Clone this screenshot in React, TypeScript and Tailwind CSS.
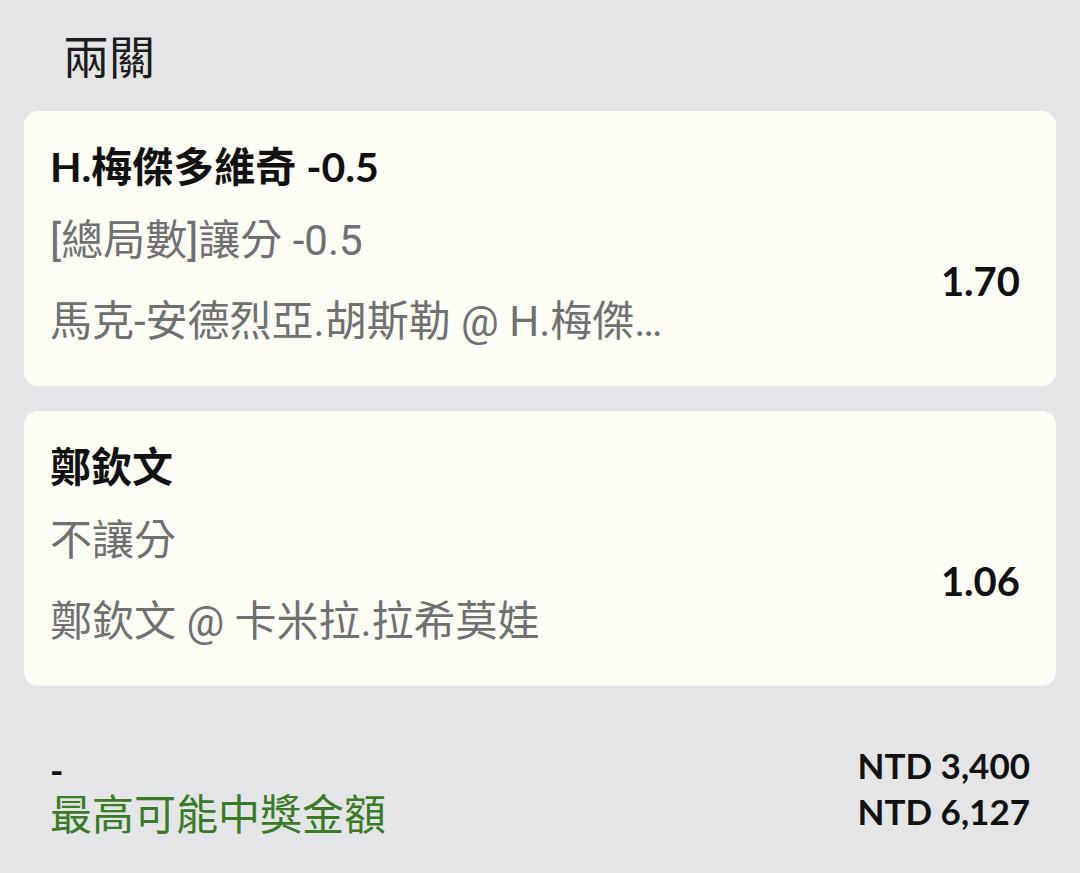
const latin = "font-['Lato','Noto_Sans_CJK_TC',sans-serif]";
const cjk = "font-['Noto_Sans_CJK_TC','Noto_Sans',sans-serif]";
const sub = "font-['Roboto','Noto_Sans_CJK_TC',sans-serif]";

interface Leg {
  pick: string;
  market: string;
  match: string;
  odds: string;
}

const legs: Leg[] = [
  {
    pick: "H.梅傑多維奇 -0.5",
    market: "[總局數]讓分 -0.5",
    match: "馬克-安德烈亞.胡斯勒 @ H.梅傑多維奇",
    odds: "1.70",
  },
  {
    pick: "鄭欽文",
    market: "不讓分",
    match: "鄭欽文 @ 卡米拉.拉希莫娃",
    odds: "1.06",
  },
];

function LegCard({ leg }: { leg: Leg }) {
  return (
    <div className="flex h-[275px] justify-between rounded-[14px] bg-[#fdfdf5] pl-[26px] pr-[36px]">
      <div className="flex w-[645px] flex-col pt-[28px]">
        <div className={`h-[56px] truncate text-[41px] font-bold leading-[56px] text-[#111] ${latin}`}>{leg.pick}</div>
        <div className={`mt-[18px] h-[56px] truncate text-[42px] leading-[56px] text-[#707070] ${sub}`}>{leg.market}</div>
        <div className={`mt-[25px] h-[56px] truncate text-[42px] leading-[56px] text-[#707070] ${sub}`}>{leg.match}</div>
      </div>
      <div className="pt-[142px]">
        <div className={`h-[56px] text-[40px] font-bold leading-[56px] text-[#111] ${latin}`}>{leg.odds}</div>
      </div>
    </div>
  );
}

export default function App() {
  return (
    <div className={`min-h-screen bg-[#e4e5e7] px-6 ${latin}`}>
      <div className={`flex h-[108px] items-center pl-[39px] text-[46px] text-[#1c1c1c] ${cjk}`}>兩關</div>

      <div className="mt-[3px] flex flex-col gap-[25px]">
        {legs.map((leg) => (
          <LegCard key={leg.pick} leg={leg} />
        ))}
      </div>

      <div className="mt-[56px] flex justify-between pl-[26px] pr-[26px]">
        <div className="flex flex-col">
          <div className="h-[48px] pt-[8px] text-[36px] font-bold leading-[40px] text-[#111]">-</div>
          <div className={`h-[44px] text-[42px] leading-[44px] text-[#3b7b27] ${cjk}`}>最高可能中獎金額</div>
        </div>
        <div className="flex flex-col items-end">
          <div className="h-[46px] text-[35px] font-bold leading-[46px] text-[#111]">NTD 3,400</div>
          <div className="h-[46px] text-[35px] font-bold leading-[46px] text-[#111]">NTD 6,127</div>
        </div>
      </div>
    </div>
  );
}
